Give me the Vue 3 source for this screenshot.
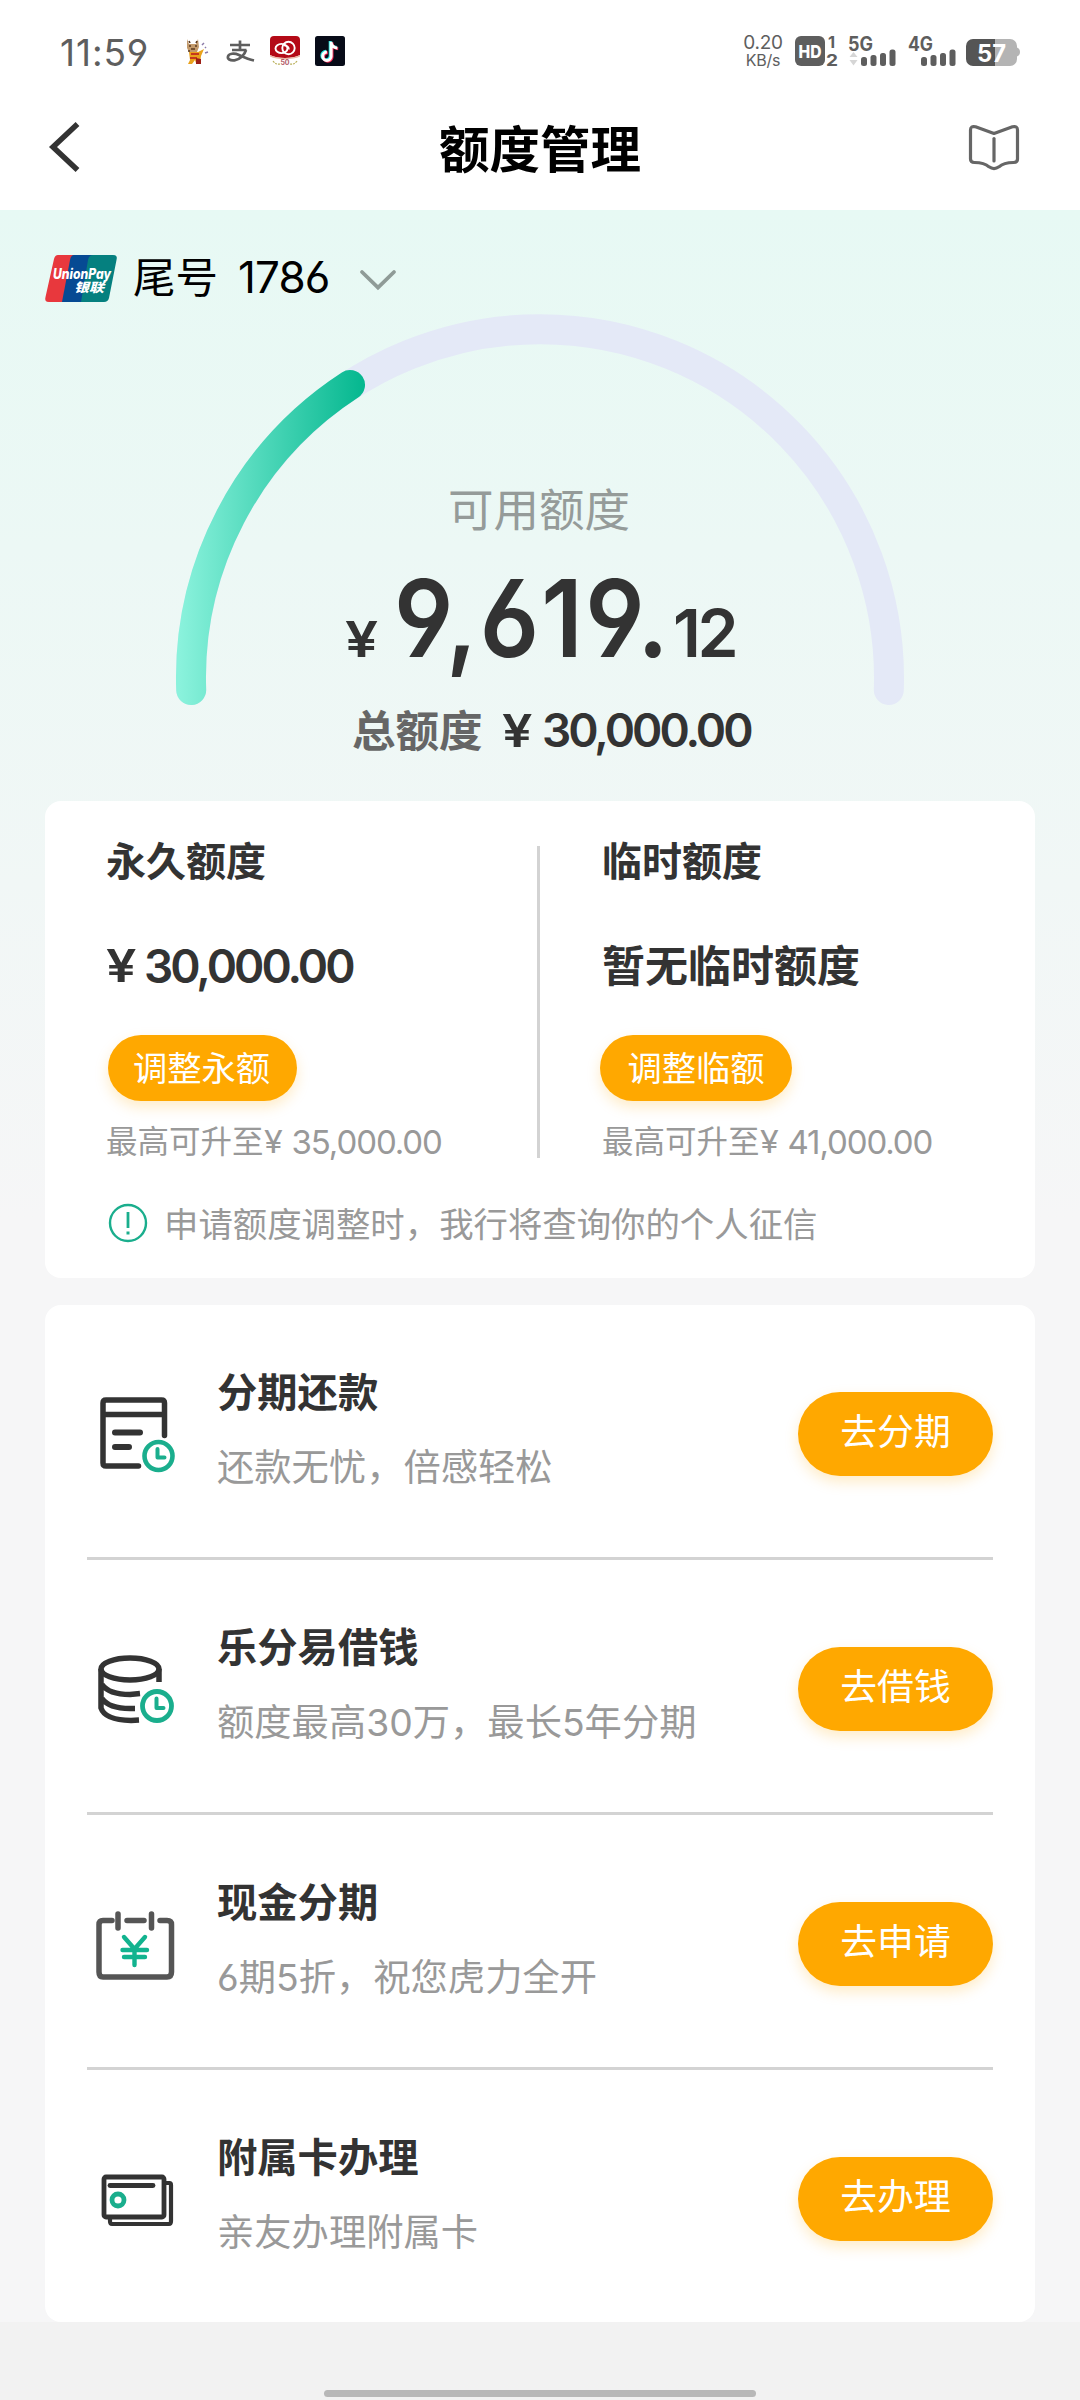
<script setup>
const quotas = [
  { title: '永久额度', yen: '¥', amount: '30,000.00', action: '调整永额', max: '35,000.00', wide: false },
  { title: '临时额度', yen: '', amount: '暂无临时额度', action: '调整临额', max: '41,000.00', wide: true }
]
const services = [
  { icon: 'bill', title: '分期还款', desc: '还款无忧，倍感轻松', action: '去分期' },
  { icon: 'coins', title: '乐分易借钱', desc: '额度最高30万，最长5年分期', action: '去借钱' },
  { icon: 'cash', title: '现金分期', desc: '6期5折，祝您虎力全开', action: '去申请' },
  { icon: 'card', title: '附属卡办理', desc: '亲友办理附属卡', action: '去办理' }
]
</script>

<template>
  <div class="page">
    <header class="top">
      <div class="status">
        <span class="clock">11:59</span>
        <div class="apps">
          <svg width="30" height="30" viewBox="0 0 30 30">
            <path d="M7 3l2 5h7l2-5 1 8-2 5H9l-2-4z" fill="#c39a6b" />
            <path d="M9 5l1 2m6 0l1-2M9 10h2m4 0h2M11 13h4M8 15h2" stroke="#5b3a20" stroke-width="1.6" />
            <path d="M9 16h9l6-3-3 7-1 7h-4l-1-3-3 4H8l2-4z" fill="#e9a21c" />
            <path d="M11 18h8M10 22h7" stroke="#c5381d" stroke-width="2" />
            <path d="M16 22l5 1v5h-5z" fill="#9c1f16" />
            <path d="M22 9l2-2M25 11l1 1M25 17l3-1" stroke="#8b7aa8" stroke-width="1.5" />
          </svg>
          <svg width="30" height="30" viewBox="0 0 30 30" fill="none" stroke="#5e5e5e">
            <path d="M5 9h20M15 4.500v9M7 14h14.500" stroke-width="2.700" />
            <path d="M21 14c-1.500 5-6 9.500-11.500 10.300-4.500.6-7.200-1.400-6.500-4 .8-2.800 6-3.600 11-1.400 4 1.800 9 4.200 15 5.600" stroke-width="2.700" />
          </svg>
          <svg width="30" height="30" viewBox="0 0 30 30">
            <path d="M4 0h22a4 4 0 0 1 4 4v15c-7 4-23 4-30 0V4a4 4 0 0 1 4-4z" fill="#b40a17" />
            <path d="M0 19c7 4 23 4 30 0v1.500c-7 3.500-23 3.500-30 0z" fill="#e9b7a6" />
            <g fill="none" stroke="#fff" stroke-width="1.900">
              <ellipse cx="11.500" cy="12.500" rx="6" ry="4.600" />
              <circle cx="18.500" cy="12" r="6.200" />
              <path d="M14 9.500c3 0 5 1.500 5 4" stroke-width="1.500" />
            </g>
            <path d="M3 25q3 4 7 3M27 25q-3 4-7 3" fill="none" stroke="#b9b05a" stroke-width="1.200" stroke-dasharray="2 1" />
            <text x="15" y="29" font-size="7" font-weight="700" text-anchor="middle" fill="#b5606a">50</text>
          </svg>
          <svg width="30" height="30" viewBox="0 0 30 30">
            <rect width="30" height="30" rx="2.500" fill="#070b18" />
            <g fill="none" stroke-width="3">
              <path d="M15.200 5v14.500a4.200 4.200 0 1 1-4.200-4.200M15.200 6c.6 3.200 3 5 6.200 5.200" stroke="#25e5e0" />
              <path d="M17 6.500V21a4.200 4.200 0 1 1-4.200-4.200M17 7.500c.6 3.200 3 5 6.200 5.200" stroke="#fb2a57" />
              <path d="M16.100 5.700v14.600a4.200 4.200 0 1 1-4.200-4.200M16.100 6.700c.6 3.200 3 5 6.200 5.200" stroke="#fff" />
            </g>
          </svg>
        </div>
        <div class="speed"><span class="rate">0.20</span><span class="unit">KB/s</span></div>
        <svg class="signals" width="228" height="32" viewBox="0 0 228 32" fill="#5e5e5e">
          <rect x="0" y="1" width="30" height="30" rx="6" />
          <text x="15" y="23" font-size="18" font-weight="800" fill="#fff" text-anchor="middle" textLength="23" lengthAdjust="spacingAndGlyphs">HD</text>
          <text x="33" y="13" font-size="16.500" font-weight="700">1</text>
          <text x="31" y="30.800" font-size="16.500" font-weight="700" textLength="12" lengthAdjust="spacingAndGlyphs">2</text>
          <text x="53" y="15.500" font-size="19.500" font-weight="700" textLength="25" lengthAdjust="spacingAndGlyphs">5G</text>
          <path d="M54.500 22l4-5 4 5zM54.500 25l4 5.500 4-5.500z" fill="#d6d6d6" />
          <rect x="66" y="22" width="6" height="9" rx="2.500" /><rect x="75.500" y="20" width="6" height="11" rx="2.500" />
          <rect x="85" y="18" width="6" height="13" rx="2.500" /><rect x="94.500" y="14.500" width="6" height="16.500" rx="2.500" />
          <text x="113" y="15.500" font-size="19.500" font-weight="700" textLength="25" lengthAdjust="spacingAndGlyphs">4G</text>
          <rect x="126" y="22" width="6" height="9" rx="2.500" /><rect x="135.500" y="20" width="6" height="11" rx="2.500" />
          <rect x="145" y="18" width="6" height="13" rx="2.500" /><rect x="154.500" y="14.500" width="6" height="16.500" rx="2.500" />
          <path d="M200 4h15a7 7 0 0 1 7 7v1.500c4 1 4 8 0 9V24a7 7 0 0 1-7 7h-15z" fill="#b4b4b4" />
          <path d="M178 4h22v27h-22a7 7 0 0 1-7-7V11a7 7 0 0 1 7-7z" fill="#555" />
          <text x="196.500" y="26.500" font-size="24" font-weight="700" fill="#fff" text-anchor="middle" textLength="29" lengthAdjust="spacingAndGlyphs">57</text>
        </svg>
      </div>
      <div class="nav">
        <svg class="back" width="32" height="50" viewBox="0 0 32 50"><path d="M29.500 2L5 25l24.500 23" fill="none" stroke="#333" stroke-width="5.500" /></svg>
        <h1>额度管理</h1>
        <svg class="guide" width="52" height="48" viewBox="0 0 52 48" fill="none" stroke="#666" stroke-width="3.200" stroke-linecap="round" stroke-linejoin="round">
          <path d="M26 9.500L44.500 2.800Q49.500 1.600 49.500 6V35Q49.500 38.500 45.500 38.500C38 38.500 34.500 39.500 31 42.800Q26 46.400 21 42.800C17.500 39.500 14 38.500 6.500 38.500Q2.500 38.500 2.500 35V6Q2.500 1.600 7.500 2.800Z" />
          <path d="M26 14.500V37" />
        </svg>
      </div>
    </header>

    <section class="hero">
      <div class="account">
        <svg width="72" height="48" viewBox="0 0 72 48">
          <path d="M11 0H30L19 47H4Q-1 47 .5 42L9 4Q10 0 13 0z" fill="#e8383d" />
          <path d="M29 0H50L39 47H17L25 5Q26 0 29 0z" fill="#064a93" />
          <path d="M48 0H68Q73 0 71.500 5L64 43Q63 47 59 47H36L43 5Q44 0 48 0z" fill="#05807f" />
          <text x="8" y="23.500" font-size="14.500" font-weight="800" font-style="italic" fill="#fff" textLength="58" lengthAdjust="spacingAndGlyphs">UnionPay</text>
          <text x="29" y="37" font-size="12.500" font-weight="900" font-style="italic" fill="#fff" textLength="30" lengthAdjust="spacingAndGlyphs">银联</text>
        </svg>
        <span class="tail">尾号</span>
        <span class="digits">1786</span>
        <svg width="38" height="24" viewBox="0 0 38 24"><path d="M3 4l16 15.500L35 4" fill="none" stroke="#8f9b97" stroke-width="3.800" stroke-linecap="round" /></svg>
      </div>
      <div class="gauge">
        <svg class="arc" width="760" height="420" viewBox="160 300 760 420" fill="none" stroke-width="30" stroke-linecap="round">
          <defs>
            <linearGradient id="arcFill" gradientUnits="userSpaceOnUse" x1="180" y1="0" x2="362" y2="0">
              <stop offset="0" stop-color="#8af2dc" />
              <stop offset="1" stop-color="#06b890" />
            </linearGradient>
          </defs>
          <path d="M191.200 690A349 349 0 1 1 888.800 690" stroke="#e4e9f7" />
          <path d="M191.200 690A349 349 0 0 1 350 385" stroke="url(#arcFill)" />
        </svg>
        <div class="reading">
          <p class="caption">可用额度</p>
          <p class="available"><span class="sign">¥</span><span class="whole">9,619.</span><span class="cents">12</span></p>
          <p class="total"><span class="label">总额度</span><span class="yen">¥</span><span class="num">30,000.00</span></p>
        </div>
      </div>
    </section>

    <section class="card quota">
      <div class="columns">
        <div v-for="q in quotas" :key="q.title" class="column" :class="{ wide: q.wide }">
          <h2>{{ q.title }}</h2>
          <p class="amount"><template v-if="q.yen"><span class="yen">{{ q.yen }}</span><span class="num">{{ q.amount }}</span></template><template v-else>{{ q.amount }}</template></p>
          <button class="adjust">{{ q.action }}</button>
          <p class="max">最高可升至<span class="maxyen">¥</span><span class="maxnum">{{ q.max }}</span></p>
        </div>
      </div>
      <div class="notice">
        <svg width="40" height="40" viewBox="0 0 40 40" fill="none" stroke="#1aae8d" stroke-width="2.400">
          <circle cx="20" cy="20" r="18" /><path d="M20 9v16" stroke-width="2.800" /><path d="M20 28.500v3" stroke-width="3" />
        </svg>
        <span>申请额度调整时，我行将查询你的个人征信</span>
      </div>
    </section>

    <section class="card services">
      <div v-for="s in services" :key="s.title" class="row">
        <svg class="icon" width="84" height="84" viewBox="0 0 84 84" fill="none" stroke="#333" stroke-width="5.500" stroke-linecap="round" stroke-linejoin="round">
          <template v-if="s.icon === 'bill'">
            <path d="M71.500 43.500V11Q71.500 8 68.500 8H13Q10 8 10 11V71Q10 74 13 74H45.500M10 22.500H71.500" />
            <path d="M22 40.500H47M22 55H36" stroke-width="6" />
            <circle cx="65.500" cy="64" r="14" stroke="#1aae8d" stroke-width="4.600" />
            <path d="M64.500 57V65.500H71.500" stroke="#1aae8d" stroke-width="4" />
          </template>
          <template v-else-if="s.icon === 'coins'">
            <ellipse cx="37" cy="22" rx="29" ry="11" />
            <path d="M8 22V61Q12 73 38 73.500L46 73M66 22V35M9 37.500Q16 47.500 37 47.500L47 46.500M9 51.500Q16 61.500 37 61.500H42" stroke-linecap="butt" />
            <circle cx="64" cy="59" r="14.500" stroke="#1aae8d" stroke-width="4.800" />
            <path d="M63.500 51.500V61H70.500" stroke="#1aae8d" stroke-width="4" />
          </template>
          <template v-else-if="s.icon === 'cash'">
            <path d="M19 18.500H10Q6 18.500 6 22.500V70Q6 75 10 75H74Q78.500 75 78.500 70V22.500Q78.500 18.500 74 18.500H67M34 18.500H51M25 12V26M58.500 12V26" stroke="#555" />
            <path d="M31 35L41.500 47L52 35M41.500 47V63M29.500 48H54M31 55H52" stroke="#12b38f" stroke-width="4.400" />
          </template>
          <template v-else>
            <rect x="11" y="20" width="60" height="40" rx="2" stroke-width="4.800" />
            <path d="M72 26H76.500Q78 26 78 28V64Q78 67 76 67H19Q17 67 17 64V61" stroke-width="4.200" />
            <path d="M17 28.500H60" stroke-width="4.800" />
            <circle cx="25" cy="43" r="6" stroke="#1aae8d" stroke-width="4.800" />
          </template>
        </svg>
        <div class="info"><h3>{{ s.title }}</h3><p>{{ s.desc }}</p></div>
        <button class="go">{{ s.action }}</button>
      </div>
    </section>
    <footer class="home"><i></i></footer>
  </div>
</template>

<style>
body { margin: 0; background: #f2f2f2; }
</style>

<style scoped>
* { box-sizing: border-box; margin: 0; padding: 0; }
.page {
  width: 1080px; height: 2400px; overflow: hidden;
  display: flex; flex-direction: column;
  background: linear-gradient(#e7f9f4 210px, #f6f6f7 1220px);
  font-family: Inter, "Noto Sans CJK SC", sans-serif;
  font-feature-settings: "cv03", "cv04";
  color: #333;
}
svg { flex: none; display: block; overflow: visible; }
.top { height: 210px; background: #fff; flex: none; }
.status { height: 102px; padding: 0 60px; display: flex; align-items: center; color: #5e5e5e; }
.clock { width: 96px; font-size: 37px; line-height: 50px; letter-spacing: 0.9px; margin-top: 4px; white-space: nowrap; }
.apps { display: flex; gap: 15px; margin-left: 24px; }
.speed { margin-left: auto; width: 42px; display: flex; flex-direction: column; align-items: center; margin-right: 11px; white-space: nowrap; }
.rate { font-size: 19px; line-height: 18px; letter-spacing: -0.3px; }
.unit { font-size: 16px; line-height: 17px; letter-spacing: -0.2px; }
.signals { margin-right: -3px; }
.nav { height: 92px; padding: 0 60px 0 48px; display: grid; grid-template-columns: 1fr auto 1fr; align-items: center; }
.nav h1 { margin-left: 12px; margin-top: 3px; }
.back { margin-top: -2px; }
.guide { justify-self: end; }
h1 { font-size: 50.500px; line-height: 70px; font-weight: 700; color: #000; }
.hero { height: 591px; flex: none; display: flex; flex-direction: column; }
.account { height: 90px; flex: none; padding: 45px 0 0 45px; display: flex; align-items: flex-start; color: #000; }
.tail { font-size: 42.500px; line-height: 46px; margin-left: 16px; }
.digits { font-size: 44px; line-height: 45px; letter-spacing: -0.900px; margin-left: 20px; width: 98px; margin-right: 23px; white-space: nowrap; }
.account svg:last-child { margin-top: 13px; }
.gauge { display: grid; width: 760px; margin-left: 160px; }
.arc, .reading { grid-area: 1 / 1; }
.reading { padding-top: 178px; display: flex; flex-direction: column; align-items: flex-start; }
.caption { width: 758px; text-align: center; font-size: 45.500px; line-height: 66px; color: #959b99; }
.available { display: flex; align-items: baseline; height: 140px; line-height: 144px; padding-left: 185px; font-weight: 600; margin-top: 2px; }
.sign { font-size: 49px; width: 49px; transform: scaleX(1.2); transform-origin: left; }
.whole { font-size: 107px; letter-spacing: 2.500px; width: 279px; transform: scaleX(.92); transform-origin: left; white-space: nowrap; }
.cents { font-size: 66px; letter-spacing: -3.500px; }
.total { display: flex; line-height: 60px; align-items: baseline; font-weight: 600; padding-left: 192px; margin-top: 14px; }
.label { font-size: 43.500px; font-weight: 700; color: #666; width: 150px; }
.yen { font-size: 45px; width: 40px; transform: scaleX(1.2); transform-origin: left; }
.num { font-size: 46px; letter-spacing: -3px; }
.card { width: 990px; margin: 0 45px; background: #fff; border-radius: 16px; flex: none; }
.quota { height: 477px; padding-top: 30px; }
.columns { display: flex; height: 340px; }
.column { width: 492px; padding-left: 61px; }
.column.wide { width: 498px; padding-left: 65px; background: linear-gradient(#d3d3d3, #d3d3d3) no-repeat 0 15px / 3px 312px; }
h2 { font-size: 40px; line-height: 62px; font-weight: 700; }
.amount { display: flex; margin-top: 42px; height: 62px; line-height: 62px; font-size: 43px; font-weight: 700; white-space: nowrap; }
.amount .yen, .amount .num { font-weight: 600; }
.amount .yen { width: 38px; }
button { border: 0; color: #fff; background: #ffa800; font-family: inherit; display: flex; align-items: center; justify-content: center; box-shadow: 0 6px 14px rgba(255, 168, 0, .22); }
.adjust { width: 189px; height: 66px; border-radius: 33px; font-size: 34.300px; margin: 38px 0 0 2px; padding: 0 2px 4px 0; }
.wide .adjust { width: 192px; margin-left: -2px; padding-right: 0; }
.max { font-size: 31.500px; line-height: 46px; margin-top: 18px; color: #999; display: flex; white-space: nowrap; }
.maxyen { width: 28px; font-size: 31px; transform: scaleX(1.1); transform-origin: left; }
.maxnum { font-size: 33px; letter-spacing: -1.100px; }
.notice { display: flex; align-items: center; height: 46px; margin: 29px 0 0 63px; gap: 16px; font-size: 34.400px; color: #999; }
.notice span { padding-bottom: 3px; }
.services { margin-top: 27px; height: 1017px; padding: 0 42px; }
.row { height: 255px; border-bottom: 3px solid #d3d3d3; display: flex; align-items: flex-start; }
.row:last-child { border-bottom: 0; }
.icon { margin: 87px 0 0 6px; }
.info { margin: 58px 0 0 40px; }
h3 { font-size: 40.300px; line-height: 60px; font-weight: 700; }
.info p { font-size: 37.300px; line-height: 54px; margin-top: 18px; color: #999; white-space: nowrap; }
.go { margin: 87px 0 0 auto; width: 195px; height: 84px; border-radius: 42px; font-size: 36.800px; padding-bottom: 11px; }
.home { flex: 1; background: #f2f2f2; display: flex; align-items: flex-end; justify-content: center; padding-bottom: 3px; }
.home i { width: 432px; height: 7px; border-radius: 4px; background: #b8b8b8; }
</style>
